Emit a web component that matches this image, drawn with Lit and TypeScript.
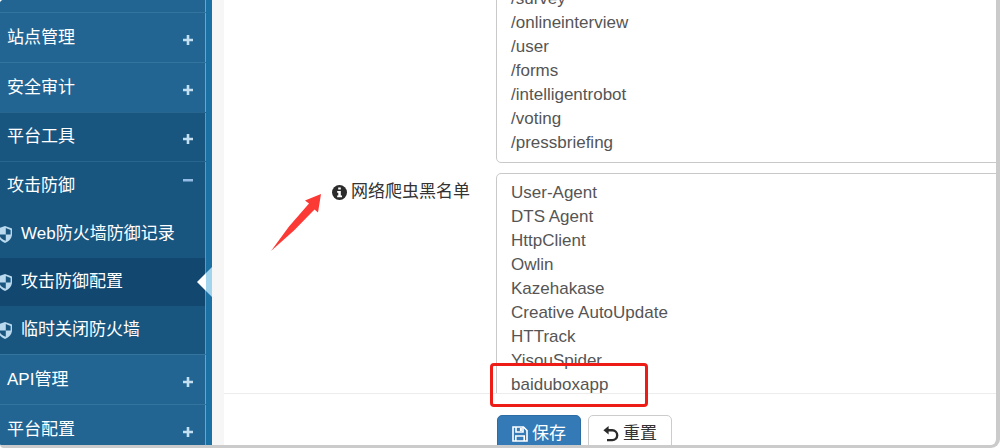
import { LitElement, html, css, nothing } from "lit";
import { customElement, state } from "lit/decorators.js";

const shieldIcon = html`<svg class="shield" viewBox="0 0 14 17" aria-hidden="true">
  <path d="M7 0 14 2.6V8c0 4.300-3 7.200-7 9-4-1.800-7-4.700-7-9V2.600Z" fill="#b9d9ee" />
  <path d="M7.800 2v6.500h4.800V3.900ZM7.800 8.500H1.500c.2 3 2.800 5.200 6.300 6.300Z" fill="#19567f" />
</svg>`;

const infoIcon = html`<svg class="info" viewBox="0 0 16 16" aria-hidden="true">
  <circle cx="8" cy="8" r="8" fill="#2b2b2b" />
  <path d="M6.600 2.600h2.800v2.300H6.600ZM5.500 6.400h3.900v4.800h1.300v1.800H5.500v-1.800h1.200V8.200H5.500Z" fill="#fff" />
</svg>`;

const saveIcon = html`<svg class="glyph" viewBox="0 0 16 16" aria-hidden="true" fill="none" stroke="#fff" stroke-width="1.600">
  <path d="M1 1h10.500L15 4.500V15H1Z" />
  <path d="M4 1v5h7V1M3.800 15v-5h8.400v5" />
  <path d="M8.900 2v3" stroke-width="2" />
</svg>`;

const resetIcon = html`<svg class="glyph" viewBox="0 0 16 16" aria-hidden="true">
  <path d="M3 4.300H9.300a4.900 4.900 0 0 1 0 9.800H4" fill="none" stroke="#2b2b2b" stroke-width="2.400" />
  <path d="M5.600 0v8.600L.4 4.300Z" fill="#2b2b2b" />
</svg>`;

interface MenuItem {
  label: string;
  open?: boolean;
  dark?: boolean;
  children?: string[];
}

const MENU: MenuItem[] = [
  { label: "站点管理" },
  { label: "安全审计" },
  { label: "平台工具", dark: true },
  {
    label: "攻击防御",
    dark: true,
    open: true,
    children: ["Web防火墙防御记录", "攻击防御配置", "临时关闭防火墙"],
  },
  { label: "API管理" },
  { label: "平台配置" },
];

const PATHS = ["/survey", "/onlineinterview", "/user", "/forms", "/intelligentrobot", "/voting", "/pressbriefing"];

const CRAWLERS = [
  "User-Agent",
  "DTS Agent",
  "HttpClient",
  "Owlin",
  "Kazehakase",
  "Creative AutoUpdate",
  "HTTrack",
  "YisouSpider",
  "baiduboxapp",
];

@customElement("side-menu")
export class SideMenu extends LitElement {
  @state() private current = "攻击防御配置";

  static styles = css`
    :host {
      display: block;
      box-sizing: border-box;
      min-height: 0;
      overflow: hidden;
      padding-right: 6px;
      background: #1b70a4;
      color: #fff;
    }
    .list {
      min-height: 100%;
      box-sizing: border-box;
      padding-top: 12px;
      background: #226593;
      box-shadow: inset -1px 0 #69a5c9;
    }
    .row {
      display: flex;
      align-items: center;
      justify-content: space-between;
      box-sizing: border-box;
      width: 100%;
      height: 50px;
      padding: 0 13px 0 7px;
      border: 0;
      border-top: 1px solid #34759f;
      background: none;
      color: inherit;
      font: inherit;
      text-align: left;
    }
    .row.dark {
      height: 49px;
      background: #19567f;
      border-top-color: #286690;
      box-shadow: inset -1px 0 #5b9bc2;
    }
    .sign {
      width: 10px;
      height: 10px;
      margin-top: 4px;
      fill: #c3e0f2;
    }
    .open .sign {
      margin-top: -10px;
      fill: #94bce6;
    }
    .sub {
      display: flex;
      align-items: center;
      gap: 9px;
      height: 48px;
      margin-left: -2px;
      background: #19567f;
      box-shadow: inset -1px 0 #5b9bc2;
      color: inherit;
      text-decoration: none;
    }
    .sub.current {
      position: relative;
      background: #124770;
    }
    .shield {
      flex: none;
      width: 14px;
      height: 17px;
    }
    .pointer {
      position: absolute;
      right: -6px;
      top: 9px;
      width: 15px;
      height: 30px;
    }
  `;

  render() {
    return html`<nav class="list">
      ${MENU.map(
        (item) => html`
          <button class="row ${item.dark ? "dark" : ""} ${item.open ? "open" : ""}" aria-expanded=${item.open ? "true" : "false"}>
            <span>${item.label}</span>
            <svg class="sign" viewBox="0 0 10 10" aria-hidden="true">
              <path d=${item.open ? "M0 3h10v2.500H0Z" : "M3.700 0h2.600v3.700H10v2.600H6.300V10H3.700V6.300H0V3.700h3.700Z"} />
            </svg>
          </button>
          ${item.children?.map(
            (name) => html`<a
              class="sub ${name === this.current ? "current" : ""}"
              href="#"
              @click=${(e: Event) => {
                e.preventDefault();
                this.current = name;
              }}
              >${shieldIcon}<span>${name}</span>${name === this.current
                ? html`<svg class="pointer" viewBox="0 0 15 30" aria-hidden="true">
                    <path d="M0 15 9 6v18Z" fill="#fff" />
                    <path d="M9 6 15 0v30L9 24Z" fill="#a3d4ee" />
                  </svg>`
                : nothing}</a
            >`,
          )}
        `,
      )}
    </nav>`;
  }
}

@customElement("app-root")
export class AppRoot extends LitElement {
  static styles = css`
    :host {
      display: grid;
      grid-template-columns: 212px minmax(0, 1fr);
      grid-template-rows: minmax(0, 1fr);
      box-sizing: border-box;
      height: 100vh;
      overflow: hidden;
      position: relative;
      border: solid #cbcbcb;
      border-width: 0 4px 3px 0;
      border-radius: 4px 0 9px 4px;
      background: #fff;
      color: #333;
      font: 17px/24px "Liberation Sans", "Noto Sans CJK SC", sans-serif;
    }
    .main {
      display: grid;
      grid-template-rows: minmax(0, 1fr) 52px;
      border-left: 12px solid #f6f6f6;
    }
    .form {
      overflow: hidden;
    }
    .fields {
      display: flex;
      flex-direction: column;
      gap: 10px;
      margin: -21px -8px 0 0;
    }
    .field {
      display: grid;
      grid-template-columns: 246px minmax(0, 1fr);
      column-gap: 26px;
    }
    .label {
      display: flex;
      align-items: center;
      justify-content: flex-end;
      gap: 4px;
      height: 38px;
    }
    .info {
      width: 15px;
      height: 15px;
    }
    textarea {
      display: block;
      box-sizing: border-box;
      width: 100%;
      margin: 0;
      padding: 7px 14px;
      border: 1px solid #c9c9c9;
      border-radius: 5px;
      overflow: hidden;
      resize: none;
      background: #fff;
      color: #555;
      font: inherit;
    }
    .actions {
      display: flex;
      align-items: flex-start;
      gap: 7px;
      padding: 21px 0 0 273px;
      border-top: 1px solid #ececec;
      box-sizing: border-box;
    }
    .btn {
      display: flex;
      align-items: center;
      gap: 4px;
      height: 38px;
      padding: 0 14px;
      border: 1px solid #ccc;
      border-radius: 5px;
      background: #fff;
      color: #333;
      font: inherit;
      white-space: nowrap;
    }
    .btn.primary {
      border-color: #2e6da4;
      background: #337ab7;
      color: #fff;
    }
    .glyph {
      width: 16px;
      height: 16px;
    }
    .arrow {
      position: absolute;
      left: 270px;
      top: 193px;
      width: 52px;
      height: 59px;
    }
    .mark {
      position: absolute;
      left: 490px;
      top: 363px;
      box-sizing: border-box;
      width: 158px;
      height: 44px;
      border: 3px solid #ee1c16;
      border-radius: 4px;
    }
  `;

  render() {
    return html`
      <side-menu></side-menu>
      <main class="main">
        <div class="form">
          <div class="fields">
            <div class="field">
              <span></span>
              <textarea rows="7" aria-label="URL" spellcheck="false" .value=${PATHS.join("\n")}></textarea>
            </div>
            <div class="field">
              <label class="label" for="crawlers">${infoIcon}<span>网络爬虫黑名单</span></label>
              <textarea id="crawlers" rows="10" spellcheck="false" .value=${CRAWLERS.join("\n")}></textarea>
            </div>
          </div>
        </div>
        <div class="actions">
          <button class="btn primary">${saveIcon}<span>保存</span></button>
          <button class="btn">${resetIcon}<span>重置</span></button>
        </div>
      </main>
      <svg class="arrow" viewBox="0 0 52 59" aria-hidden="true">
        <path d="M51 1 35 7.500l4 3L19 33.500 1 58 24 37.500 44.500 16.500l3.500 3Z" fill="#fb3a36" />
      </svg>
      <div class="mark"></div>
    `;
  }
}
